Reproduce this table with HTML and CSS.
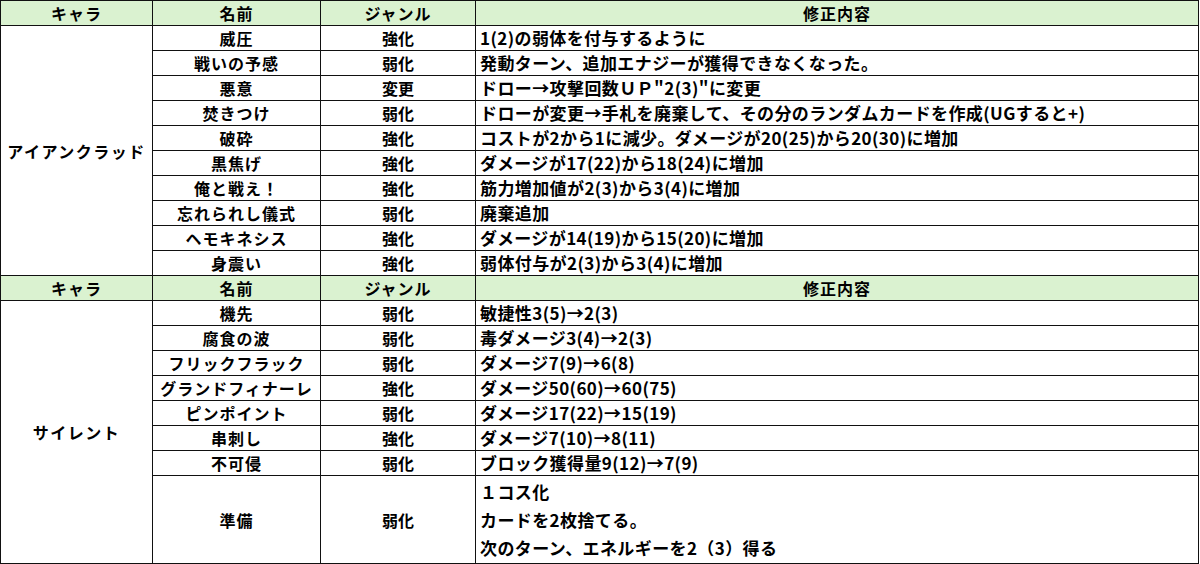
FILE: index.html
```html
<!DOCTYPE html>
<html lang="ja">
<head>
<meta charset="utf-8">
<link rel="stylesheet" href="styles.css">
</head>
<body>
<table class="sheet">
  <colgroup>
    <col class="c-chara"><col class="c-name"><col class="c-genre"><col class="c-desc">
  </colgroup>
  <tbody>
    <tr class="head"><th>キャラ</th><th>名前</th><th>ジャンル</th><th>修正内容</th></tr>
    <tr><td class="chara" rowspan="10">アイアンクラッド</td><td class="name">威圧</td><td class="genre">強化</td><td class="desc">1(2)の弱体を付与するように</td></tr>
    <tr><td class="name">戦いの予感</td><td class="genre">弱化</td><td class="desc">発動ターン、追加エナジーが獲得できなくなった。</td></tr>
    <tr><td class="name">悪意</td><td class="genre">変更</td><td class="desc">ドロー→攻撃回数ＵＰ"2(3)"に変更</td></tr>
    <tr><td class="name">焚きつけ</td><td class="genre">弱化</td><td class="desc">ドローが変更→手札を廃棄して、その分のランダムカードを作成(UGすると+)</td></tr>
    <tr><td class="name">破砕</td><td class="genre">強化</td><td class="desc">コストが2から1に減少。ダメージが20(25)から20(30)に増加</td></tr>
    <tr><td class="name">黒焦げ</td><td class="genre">強化</td><td class="desc">ダメージが17(22)から18(24)に増加</td></tr>
    <tr><td class="name">俺と戦え！</td><td class="genre">強化</td><td class="desc">筋力増加値が2(3)から3(4)に増加</td></tr>
    <tr><td class="name">忘れられし儀式</td><td class="genre">弱化</td><td class="desc">廃棄追加</td></tr>
    <tr><td class="name">ヘモキネシス</td><td class="genre">強化</td><td class="desc">ダメージが14(19)から15(20)に増加</td></tr>
    <tr><td class="name">身震い</td><td class="genre">強化</td><td class="desc">弱体付与が2(3)から3(4)に増加</td></tr>
    <tr class="head"><th>キャラ</th><th>名前</th><th>ジャンル</th><th>修正内容</th></tr>
    <tr><td class="chara" rowspan="8">サイレント</td><td class="name">機先</td><td class="genre">弱化</td><td class="desc">敏捷性3(5)→2(3)</td></tr>
    <tr><td class="name">腐食の波</td><td class="genre">弱化</td><td class="desc">毒ダメージ3(4)→2(3)</td></tr>
    <tr><td class="name">フリックフラック</td><td class="genre">弱化</td><td class="desc">ダメージ7(9)→6(8)</td></tr>
    <tr><td class="name">グランドフィナーレ</td><td class="genre">強化</td><td class="desc">ダメージ50(60)→60(75)</td></tr>
    <tr><td class="name">ピンポイント</td><td class="genre">弱化</td><td class="desc">ダメージ17(22)→15(19)</td></tr>
    <tr><td class="name">串刺し</td><td class="genre">強化</td><td class="desc">ダメージ7(10)→8(11)</td></tr>
    <tr><td class="name">不可侵</td><td class="genre">弱化</td><td class="desc">ブロック獲得量9(12)→7(9)</td></tr>
    <tr class="tall"><td class="name">準備</td><td class="genre">弱化</td><td class="desc multi"><div class="line">１コス化</div><div class="line">カードを2枚捨てる。</div><div class="line">次のターン、エネルギーを2（3）得る</div></td></tr>
  </tbody>
</table>
</body>
</html>
```
FILE: styles.css
```css
html, body {
  margin: 0;
  padding: 0;
  background: #ffffff;
}
body {
  font-family: "Noto Sans CJK JP", "Noto Sans", sans-serif;
  color: #000;
}
.sheet {
  border-collapse: collapse;
  table-layout: fixed;
  width: 1198px;
}
.c-chara { width: 152px; }
.c-name { width: 168px; }
.c-genre { width: 155px; }
.c-desc { width: 723px; }
.sheet tr { height: 25px; }
.sheet th, .sheet td {
  border: 1px solid #111;
  padding: 0 5px;
  font-size: 16px;
  font-weight: 700;
  line-height: 22px;
  white-space: nowrap;
  overflow: hidden;
  vertical-align: middle;
}
.head th {
  background: #daf2d0;
  text-align: center;
  letter-spacing: 1px;
}
.chara, .name, .genre { text-align: center; }
.chara { letter-spacing: 1.5px; }
.name { letter-spacing: 1px; }
.sheet td.desc {
  text-align: left;
  font-size: 17px;
  letter-spacing: 0.4px;
  padding-left: 4px;
}
.sheet tr.tall { height: 88px; }
.multi { padding-top: 2px; padding-bottom: 2px; }
.multi .line { height: 28px; line-height: 28px; }
```
